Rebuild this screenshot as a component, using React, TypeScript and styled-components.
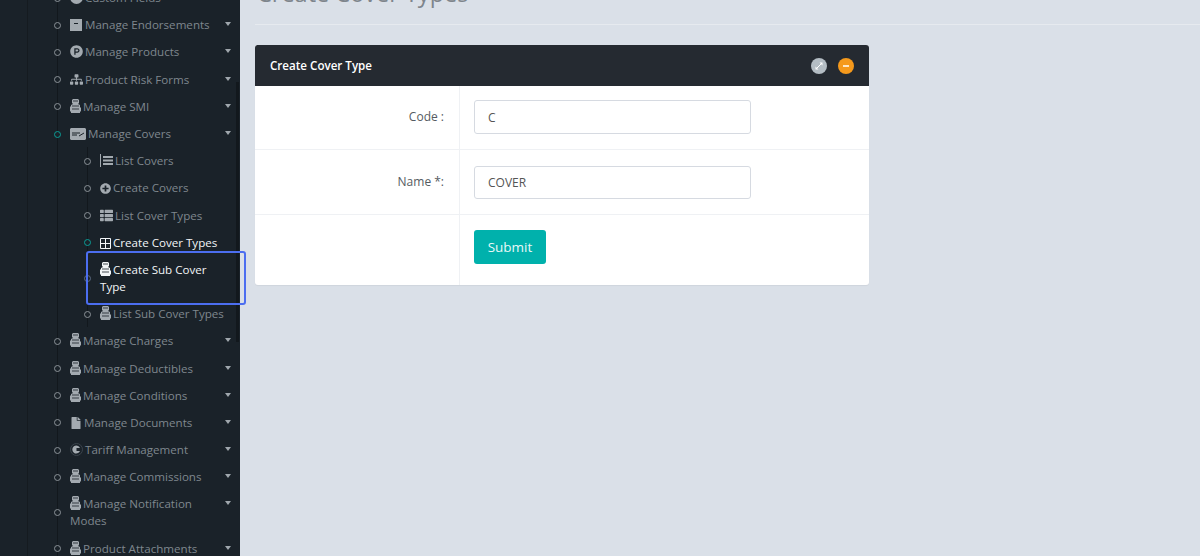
import React from 'react';
import styled, { createGlobalStyle } from 'styled-components';
import { FaFile, FaPlusCircle, FaProductHunt, FaSitemap, FaThList } from 'react-icons/fa';

const GlobalStyle = createGlobalStyle`
  html, body {
    margin: 0;
    height: 556px;
    overflow: hidden;
    background: #dae0e8;
    font-family: "Open Sans", "Liberation Sans", sans-serif;
  }
`;

const Shell = styled.div`
  display: flex;
  height: 556px;
  overflow: hidden;
`;

const Sidebar = styled.aside`
  position: relative;
  display: flex;
  width: 240px;
  flex: none;
  background: #1a2229;
`;

const Rail = styled.div`
  width: 27px;
  flex: none;
  border-right: 1px solid #151b20;
`;

const ScrollThumb = styled.div`
  position: absolute;
  top: 82px;
  right: 1px;
  width: 3px;
  height: 260px;
  background: #12181d;
`;

const Label = styled.span`
  display: block;
  max-width: 150px;
`;

const Menu = styled.ul`
  list-style: none;
  margin: -16px 0 0 29px;
  padding: 0;
  flex: 1;
  min-width: 0;
  border-left: 1px solid #12181d;
`;

const SubMenu = styled.ul`
  list-style: none;
  margin: 0 0 0 29px;
  padding: 0;
  width: 158px;
  border-left: 1px solid #12181d;

  ${Label} {
    max-width: 130px;
  }
`;

const Item = styled.li<{ $current?: boolean; $open?: boolean; $focus?: boolean }>`
  position: relative;
  display: flex;
  justify-content: space-between;
  padding: 5.1px 9px 5.1px 12px;
  font-size: 11.6px;
  line-height: 17px;
  color: ${(p) => (p.$current || p.$focus ? '#f2f5f7' : '#7f878e')};

  &::before {
    content: '';
    position: absolute;
    left: -4px;
    top: 50%;
    width: 5px;
    height: 5px;
    margin-top: -3px;
    border: 1px solid ${(p) => (p.$current || p.$open ? '#0b9e97' : p.$focus ? '#5c6a80' : '#8b9298')};
    border-radius: 50%;
    background: #1a2229;
  }

  ${(p) =>
    p.$focus &&
    `&::after {
      content: '';
      position: absolute;
      z-index: 1;
      inset: -5px 0 -5px -2px;
      border: 2px solid #4c6ef0;
      border-radius: 3px;
    }`}
`;

const Caret = styled.i`
  flex: none;
  width: 0;
  height: 0;
  margin-top: 6px;
  border-left: 3.5px solid transparent;
  border-right: 3.5px solid transparent;
  border-top: 4px solid #a0a7ad;
`;

const Group = styled.li`
  display: block;
`;

const Glyph = styled.span<{ $bright?: boolean }>`
  display: inline-flex;
  vertical-align: -2px;
  margin-right: 2px;
  font-size: 12px;
  color: ${(p) => (p.$bright ? '#f2f5f7' : '#a3aab0')};

  svg {
    display: block;
  }
`;

const Stamp = () => (
  <svg width="11" height="14" viewBox="0 0 11 14" fill="currentColor">
    <path d="M3 0h5l1 1v3l-1 1 2 1v2l1 1v3l-1 1v1H1v-1l-1-1V8l1-1V6l2-1-1-1V1z" />
    <path d="M3 2h5M2 7h7M2 10h7" stroke="#1a2229" strokeWidth="0.8" fill="none" />
  </svg>
);

const Archive = () => (
  <svg width="13" height="12" viewBox="0 0 13 12" fill="currentColor">
    <path d="M0 0h12v12H0z" />
    <path d="M4 4h4v1H4z" fill="#1a2229" />
  </svg>
);

const CoverCard = () => (
  <svg width="16" height="12" viewBox="0 0 16 12" fill="currentColor">
    <path d="M1 0h14l1 1v10l-1 1H1l-1-1V1z" />
    <path d="M2 5h8M2 7h5M9 8l5-3" stroke="#1a2229" strokeWidth="1" fill="none" />
  </svg>
);

const Tariff = () => (
  <svg width="13" height="13" viewBox="0 0 13 13">
    <circle cx="6.5" cy="6.5" r="6" fill="none" stroke="#3b444c" />
    <path d="M10 5a4 4 0 1 0 0 3H6.5V5z" fill="currentColor" />
  </svg>
);

const Gear = () => (
  <svg width="13" height="13" viewBox="0 0 13 13" fill="currentColor">
    <circle cx="6.5" cy="6.5" r="6.5" />
    <circle cx="6.5" cy="6.5" r="2.5" fill="#1a2229" />
  </svg>
);

const BarList = () => (
  <svg width="13" height="13" viewBox="0 0 13 13" fill="currentColor">
    <path d="M0 0h1v13H0z" />
    <path d="M3 2h10v2H3zM3 5.500h10v2H3zM3 9h10v2H3z" />
  </svg>
);

const GridSquare = () => (
  <svg width="11" height="11" viewBox="0 0 11 11" fill="none" stroke="currentColor">
    <path d="M.5.500h10v10H.5zM5.500.500v10M.5 5.500h10" />
  </svg>
);

const Field = styled.input<{ $height: number; $lift?: boolean }>`
  width: 277px;
  height: ${(p) => p.$height}px;
  margin-bottom: ${(p) => (p.$lift ? '1px' : '0')};
  box-sizing: border-box;
  padding: 0 13px;
  border: 1px solid #d6dae1;
  border-radius: 3px;
  background: #fff;
  color: #555;
  font: 12px "Open Sans", sans-serif;
`;

const Main = styled.main`
  flex: 1;
  min-width: 0;
  padding-left: 15px;
  margin-top: -21px;
`;

const Heading = styled.h1`
  margin: 0;
  padding: 0 0 16px 2px;
  font-size: 23.5px;
  line-height: 29px;
  font-weight: 400;
  color: #7e858c;
  border-bottom: 1px solid #e6eaef;
`;

const Card = styled.section`
  width: 614px;
  margin-top: 20px;
  background: #fff;
  border-radius: 3px;
  overflow: hidden;
  box-shadow: 0 1px 1px rgba(0, 0, 0, 0.05);
`;

const CardHeader = styled.header`
  display: flex;
  align-items: center;
  justify-content: space-between;
  height: 41px;
  padding: 0 15px;
  background: #252a31;
  color: #fff;
  font-size: 11.6px;
  font-weight: 600;
`;

const HeaderTools = styled.div`
  display: flex;
  gap: 11px;
`;

const ToolButton = styled.span<{ $color: string }>`
  display: flex;
  align-items: center;
  justify-content: center;
  width: 16px;
  height: 16px;
  border-radius: 50%;
  background: ${(p) => p.$color};
`;

const FormRow = styled.div<{ $height: number; $last?: boolean }>`
  display: grid;
  box-sizing: border-box;
  grid-template-columns: 204px 1fr;
  height: ${(p) => p.$height}px;
  border-bottom: ${(p) => (p.$last ? 'none' : '1px solid #eff1f4')};
`;

const FieldLabel = styled.label`
  display: flex;
  align-items: center;
  justify-content: flex-end;
  padding: 0 15px 2px 0;
  font-size: 12px;
  color: #555b61;
`;

const FieldCell = styled.div`
  display: flex;
  align-items: center;
  padding-left: 14px;
  border-left: 1px solid #eff1f4;
`;

const SubmitButton = styled.button`
  align-self: flex-start;
  width: 72px;
  height: 34px;
  margin-top: 15px;
  border: none;
  border-radius: 3px;
  background: #00b1ac;
  color: #e8f8f7;
  font: 13.5px "Open Sans", sans-serif;
`;

type Entry = { icon: React.ReactNode; text: string; caret?: boolean; open?: boolean; current?: boolean; focus?: boolean };

const topBefore: Entry[] = [
  { icon: <Gear />, text: 'Custom Fields', caret: true },
  { icon: <Archive />, text: 'Manage Endorsements', caret: true },
  { icon: <FaProductHunt size={13} />, text: 'Manage Products', caret: true },
  { icon: <FaSitemap size={13} />, text: 'Product Risk Forms', caret: true },
  { icon: <Stamp />, text: 'Manage SMI', caret: true },
  { icon: <CoverCard />, text: 'Manage Covers', caret: true, open: true },
];

const covers: Entry[] = [
  { icon: <BarList />, text: 'List Covers' },
  { icon: <FaPlusCircle size={11} />, text: 'Create Covers' },
  { icon: <FaThList size={13} />, text: 'List Cover Types' },
  { icon: <GridSquare />, text: 'Create Cover Types', current: true },
  { icon: <Stamp />, text: 'Create Sub Cover Type', focus: true },
  { icon: <Stamp />, text: 'List Sub Cover Types' },
];

const topAfter: Entry[] = [
  { icon: <Stamp />, text: 'Manage Charges', caret: true },
  { icon: <Stamp />, text: 'Manage Deductibles', caret: true },
  { icon: <Stamp />, text: 'Manage Conditions', caret: true },
  { icon: <FaFile />, text: 'Manage Documents', caret: true },
  { icon: <Tariff />, text: 'Tariff Management', caret: true },
  { icon: <Stamp />, text: 'Manage Commissions', caret: true },
  { icon: <Stamp />, text: 'Manage Notification Modes', caret: true },
  { icon: <Stamp />, text: 'Product Attachments', caret: true },
];

const renderItem = (e: Entry) => (
  <Item key={e.text} $current={e.current} $open={e.open} $focus={e.focus}>
    <Label>
      <Glyph $bright={e.current || e.focus}>{e.icon}</Glyph>
      {e.text}
    </Label>
    {e.caret && <Caret />}
  </Item>
);

export default function App() {
  return (
    <Shell>
      <GlobalStyle />
      <Sidebar>
        <Rail />
        <Menu>
          {topBefore.map(renderItem)}
          <Group>
            <SubMenu>{covers.map(renderItem)}</SubMenu>
          </Group>
          {topAfter.map(renderItem)}
        </Menu>
        <ScrollThumb />
      </Sidebar>
      <Main>
        <Heading>Create Cover Types</Heading>
        <Card>
          <CardHeader>
            Create Cover Type
            <HeaderTools>
              <ToolButton $color="#b4bdc4">
                <svg width="10" height="10" viewBox="0 0 10 10" stroke="#fff" fill="#fff" strokeWidth="1">
                  <path d="M3 7l4-4" />
                  <path d="M5.500 1.500H8.500V4.500zM1.500 5.500V8.500H4.500z" strokeWidth="0" />
                </svg>
              </ToolButton>
              <ToolButton $color="#f5991c">
                <svg width="10" height="10" viewBox="0 0 10 10" stroke="#fff" strokeWidth="1.6">
                  <path d="M2 5h6" />
                </svg>
              </ToolButton>
            </HeaderTools>
          </CardHeader>
          <FormRow $height={64}>
            <FieldLabel>Code :</FieldLabel>
            <FieldCell>
              <Field $height={34} $lift defaultValue="C" />
            </FieldCell>
          </FormRow>
          <FormRow $height={65}>
            <FieldLabel>Name *:</FieldLabel>
            <FieldCell>
              <Field $height={33} defaultValue="COVER" />
            </FieldCell>
          </FormRow>
          <FormRow $height={70} $last>
            <FieldLabel />
            <FieldCell>
              <SubmitButton>Submit</SubmitButton>
            </FieldCell>
          </FormRow>
        </Card>
      </Main>
    </Shell>
  );
}
